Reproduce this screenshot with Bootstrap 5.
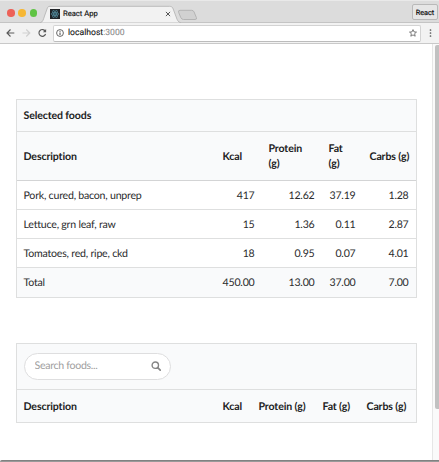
<!DOCTYPE html>
<html lang="en">
<head>
<meta charset="utf-8">
<title>React App</title>
<link href="https://cdn.jsdelivr.net/npm/bootstrap@5.3.0/dist/css/bootstrap.min.css" rel="stylesheet">
<style>
body{width:439px;height:462px;overflow:hidden;font:10.6px/15px Lato,sans-serif;color:#2b2c2d;background:#fff;text-rendering:geometricPrecision}
.window{height:462px}
.tabstrip{height:23px;background:#dcdcdc;border-top:1px solid #e9e9e9;border-bottom:1px solid #c4c4c4;font-family:Roboto,sans-serif}
.lights{gap:3.9px;padding:8px 0 0 7px;width:40px}
.light{width:7.5px;height:7.5px;border-radius:50%}
.light.red{background:#ed6158}.light.amber{background:#f6b734}.light.green{background:#5fc344}
.tabshape{position:absolute;left:0;top:0}
.tab-label{position:relative;width:133px;height:22px;margin-left:10px;padding-top:4px}
.tab-label span{font-size:7.6px;line-height:12px;margin-left:3px;color:#222;-webkit-text-stroke:.2px #222}
.tab-label .close-mark{margin-right:12px}
.profile{width:26px;height:16px;margin:3px 1px 0 auto;border:1px solid #b9b9b9;border-radius:2px;background:#e6e6e6;font-size:7.3px;line-height:15px;color:#111;-webkit-text-stroke:.2px #111}
.toolbar{height:21px;background:#f2f2f2;border-bottom:1px solid #c9c9c9;font-family:Roboto,sans-serif}
.address{width:368px;height:17px;background:#fff;border:1px solid #d3d3d3;border-bottom-color:#bcbcbc;border-radius:2px;margin-left:4px;padding:0 3px 0 2px;font-size:8.6px;color:#111}
.address .host{padding-top:1px;-webkit-text-stroke:.1px}
.address .port{color:#8a8a8a}
.viewport{height:416px}
.page{width:432px;padding:55px 15px 0 16px}
.track{width:7px;background:#fafafa;border-left:1px solid #e6e6e6;padding:1px 0 0 2px}
.thumb{height:364px;width:4px;background:#c1c1c1;border-radius:2px 0 0 2px}
.foods{width:401px;table-layout:fixed;border-collapse:separate;border-spacing:0;border:1px solid #dedfdf}
.foods th,.foods td{padding:2px 7.500px 0 6.500px;vertical-align:middle;border:0 solid #dedfdf}
.foods th{font-weight:700;text-align:left;background:#f9fafb;border-bottom-width:1px;color:#222;letter-spacing:-.13px}
.foods td{text-align:right;height:29px;border-bottom-width:1px;letter-spacing:-.22px}
.foods td:first-child{text-align:left}
.foods tfoot td{background:#f9fafb;border:0}
.selected .caption-row th{height:32px}
.selected .heads th{height:49px;border-bottom-color:#d3d4d5}
.results{margin-top:45px}
.results .caption-row th{height:46px;padding-top:0}
.results .heads th{height:32px;border:0;white-space:nowrap}
.search{width:147px;height:27px;border:1px solid #dededf;border-radius:14px;background:#fff;padding:0 9px 0 10px;margin-top:-1px}
.search input{border:0;outline:0;padding:1px 0 0;width:100px;font:10.6px/15px Lato,sans-serif;letter-spacing:-.3px;background:transparent;text-rendering:geometricPrecision}
.search input::placeholder{color:#a0a0a0;opacity:1}
.window-edge{height:2px;background:#999;border-top:1px solid #818181;border-radius:2px 0 0 0}
</style>
<script src="https://cdn.jsdelivr.net/npm/bootstrap@5.3.0/dist/js/bootstrap.bundle.min.js"></script>
</head>
<body>
<div class="window d-flex flex-column">
  <header class="tabstrip d-flex position-relative">
    <svg class="tabshape" width="210" height="22" viewBox="0 1 210 22">
      <path d="M40 23c3-1 3.500-4 4.500-7l2.500-7c.6-2 1.300-2.700 3-2.700h119.500c2 0 3 .7 3.700 2.700l3 8c1 3 1.800 5 4.800 6z" fill="#f2f2f2" stroke="#b5b5b5" stroke-width=".9"/>
      <path d="M180 10.300h11.500q2 0 2.600 1.700l2.300 5.600q.7 1.900-1.300 1.900h-11.500q-2 0-2.700-1.700l-2.300-5.500q-.6-2 1.400-2z" fill="#d1d1d1" stroke="#b0b0b0" stroke-width=".9"/>
    </svg>
    <div class="lights d-flex position-relative"><i class="light red"></i><i class="light amber"></i><i class="light green"></i></div>
    <div class="tab-label d-flex align-items-center">
      <svg width="10" height="10" viewBox="0 0 10 10"><path fill="#202327" d="M0 0h10v10H0z"/><g fill="none" stroke="#5696aa" stroke-width=".6"><ellipse cx="5" cy="5" rx="4" ry="1.500"/><ellipse cx="5" cy="5" rx="4" ry="1.500" transform="rotate(60 5 5)"/><ellipse cx="5" cy="5" rx="4" ry="1.500" transform="rotate(120 5 5)"/></g><circle cx="5" cy="5" r=".7" fill="#61bad2"/></svg>
      <span>React App</span>
      <svg class="close-mark ms-auto" width="6" height="6" viewBox="0 0 6 6"><path d="M.9.9l4.200 4.200M5.100.9L.9 5.100" stroke="#555"/></svg>
    </div>
    <div class="profile text-center">React</div>
  </header>
  <div class="toolbar d-flex align-items-center">
    <svg width="49" height="20" viewBox="0 0 49 20" fill="none" stroke-width="1.150">
      <path d="M14.300 10H7.200M10.500 6.500L7 10l3.500 3.500" stroke="#5a5a5a"/>
      <path d="M22.500 10h7.100M26.300 6.500l3.500 3.500-3.500 3.500" stroke="#cfcfcf"/>
      <path d="M45.300 8.200A3.400 3.400 0 1 0 45.600 11" stroke="#5a5a5a"/><path d="M46.100 6v3.200h-3.200z" fill="#5a5a5a"/>
    </svg>
    <div class="address d-flex align-items-center">
      <svg width="8" height="8" viewBox="0 0 8 8"><circle cx="4" cy="4" r="3.400" fill="none" stroke="#555" stroke-width=".9"/><path d="M4 3.500V6M4 1.900v.9" stroke="#444"/></svg>
      <span class="host ms-1">localhost<span class="port">:3000</span></span>
      <svg class="ms-auto" width="8" height="8" viewBox="0 0 8 8"><path d="M4 .6l1 2.300 2.500.2-1.900 1.600.6 2.500L4 5.900 1.800 7.200l.6-2.500L.5 3.100 3 2.900z" fill="none" stroke="#666" stroke-width=".85"/></svg>
    </div>
    <svg width="18" height="20" viewBox="0 0 18 20" fill="#555"><circle cx="9.500" cy="7" r=".85"/><circle cx="9.500" cy="10" r=".85"/><circle cx="9.500" cy="13" r=".85"/></svg>
  </div>
  <div class="viewport d-flex">
    <main class="page">
      <table class="foods selected">
        <colgroup><col style="width:199px"><col style="width:46px"><col style="width:60px"><col style="width:41px"><col style="width:53px"></colgroup>
        <thead>
          <tr class="caption-row"><th colspan="5">Selected foods</th></tr>
          <tr class="heads"><th>Description</th><th>Kcal</th><th>Protein<br>(g)</th><th>Fat<br>(g)</th><th class="text-nowrap">Carbs (g)</th></tr>
        </thead>
        <tbody>
          <tr><td>Pork, cured, bacon, unprep</td><td>417</td><td>12.62</td><td>37.19</td><td>1.28</td></tr>
          <tr><td>Lettuce, grn leaf, raw</td><td>15</td><td>1.36</td><td>0.11</td><td>2.87</td></tr>
          <tr><td>Tomatoes, red, ripe, ckd</td><td>18</td><td>0.95</td><td>0.07</td><td>4.01</td></tr>
        </tbody>
        <tfoot><tr><td>Total</td><td>450.00</td><td>13.00</td><td>37.00</td><td>7.00</td></tr></tfoot>
      </table>
      <table class="foods results">
        <colgroup><col style="width:199px"><col style="width:36px"><col style="width:64px"><col style="width:44px"><col style="width:56px"></colgroup>
        <thead>
          <tr class="caption-row"><th colspan="5">
            <div class="search d-flex align-items-center justify-content-between">
              <input type="text" placeholder="Search foods..." aria-label="Search foods">
              <svg width="10" height="10" viewBox="0 0 10 10" fill="none" stroke="#858585"><circle cx="4.300" cy="4.200" r="3.200" stroke-width="1.400"/><path d="M6.700 6.600l2.500 2.500" stroke-width="1.700" stroke-linecap="round"/></svg>
            </div>
          </th></tr>
          <tr class="heads"><th>Description</th><th>Kcal</th><th>Protein (g)</th><th>Fat (g)</th><th>Carbs (g)</th></tr>
        </thead>
      </table>
    </main>
    <div class="track"><div class="thumb"></div></div>
  </div>
  <div class="window-edge"></div>
</div>
</body>
</html>
